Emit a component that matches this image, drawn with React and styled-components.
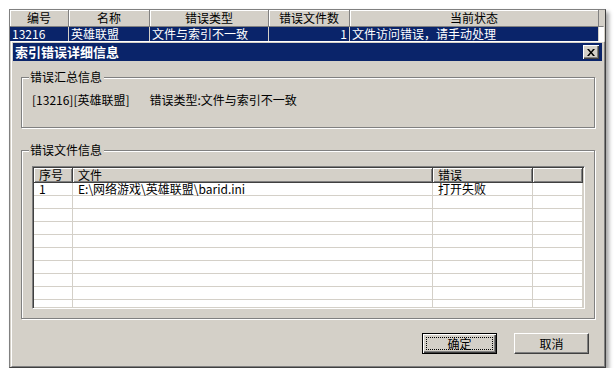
import React from 'react';
import styled, { createGlobalStyle } from 'styled-components';

const GlobalStyle = createGlobalStyle`
  body {
    margin: 0;
    background: #fff;
    font-family: "Noto Sans CJK SC", "Noto Sans", sans-serif;
    font-size: 12px;
    color: #000;
  }
`;

const backColumns = ['编号', '名称', '错误类型', '错误文件数', '当前状态'];
const backRow = ['13216', '英雄联盟', '文件与索引不一致', '1', '文件访问错误，请手动处理'];

const fileColumns = ['序号', '文件', '错误', ''];
const fileRows = [['1', 'E:\\网络游戏\\英雄联盟\\barid.ini', '打开失败', '']];
const EMPTY_ROWS = 10;

const Stage = styled.div`
  padding: 9px 0 0 9px;
`;

const Window = styled.div`
  box-sizing: border-box;
  width: 597px;
  height: 359px;
  display: flex;
  flex-direction: column;
  background: #d4d0c8;
  border-top: 1px solid #808080;
  border-left: 1px solid #808080;
  border-right: 1px solid #404040;
  border-bottom: 1px solid #404040;
  box-shadow: 3px 3px 4px rgba(0, 0, 0, 0.35);
`;

// the parent list that peeks out above the dialog
const BackList = styled.div`
  display: grid;
  grid-template-columns: 59px 81px 119px 81px 249px 1fr;
  margin-right: 3px;
`;

const BackHead = styled.div`
  box-sizing: border-box;
  height: 17px;
  line-height: 16px;
  text-align: center;
  background: #d4d0c8;
  border-right: 1px solid ${p => (p.$filler ? 'transparent' : '#808080')};
  border-bottom: 1px solid #808080;
  box-shadow: ${p => (p.$filler ? 'none' : 'inset 1px 1px 0 #fff')};
`;

const BackCell = styled.div`
  box-sizing: border-box;
  height: 14px;
  line-height: 14px;
  padding: 0 2px;
  white-space: nowrap;
  text-align: ${p => (p.$right ? 'right' : 'left')};
  color: #fff;
  background: ${p => (p.$filler ? '#fff' : '#0a246a')};
  border-right: 1px solid ${p => (p.$filler ? '#fff' : '#d4d0c8')};
`;

const Dialog = styled.div`
  flex: 1;
  display: flex;
  flex-direction: column;
  margin-left: 1px;
  padding: 1px 2px 2px 1px;
  border-top: 1px solid #fff;
  border-left: 1px solid #fff;
  border-right: 1px solid #808080;
  border-bottom: 1px solid #808080;
`;

const TitleBar = styled.div`
  height: 18px;
  display: flex;
  align-items: center;
  justify-content: space-between;
  background: #0a246a;
  padding: 0 3px 0 2px;
`;

const Title = styled.span`
  color: #fff;
  font-weight: bold;
  font-size: 13px;
  line-height: 18px;
`;

const CloseButton = styled.div`
  box-sizing: border-box;
  width: 16px;
  height: 14px;
  display: flex;
  align-items: center;
  justify-content: center;
  background: #d4d0c8;
  box-shadow: inset 1px 1px 0 #fff, inset -1px -1px 0 #404040, inset -2px -2px 0 #808080;
`;

const Body = styled.div`
  flex: 1;
  display: flex;
  flex-direction: column;
  padding: 0 7px 0 8px;
`;

const Group = styled.div`
  position: relative;
  box-sizing: border-box;
  margin-top: ${p => p.$top}px;
  height: ${p => p.$height}px;
  border: 1px solid #808080;
  box-shadow: inset 1px 1px 0 #fff, 1px 1px 0 #fff;
`;

const Legend = styled.span`
  position: absolute;
  top: -8px;
  left: 7px;
  padding: 0 2px 0 1px;
  line-height: 14px;
  background: #d4d0c8;
`;

const Summary = styled.div`
  display: flex;
  gap: 20px;
  padding: 14px 0 0 10px;
  line-height: 16px;
  white-space: pre;
`;

const ListView = styled.div`
  box-sizing: border-box;
  height: 143px;
  margin: 15px 9px 0 10px;
  background: #fff;
  border-top: 1px solid #808080;
  border-left: 1px solid #808080;
  border-right: 1px solid #fff;
  border-bottom: 1px solid #fff;
  box-shadow: inset 1px 1px 0 #404040, inset -1px -1px 0 #d4d0c8;
  padding: 1px;
  overflow: hidden;
`;

const FileGrid = styled.div`
  display: grid;
  grid-template-columns: 39px 360px 100px 1fr;
`;

const FileHead = styled.div`
  box-sizing: border-box;
  height: 15px;
  line-height: 14px;
  padding-left: 5px;
  background: #d4d0c8;
  border-right: 1px solid #404040;
  border-bottom: 1px solid #404040;
  box-shadow: inset 1px 1px 0 #fff, inset -1px -1px 0 #808080;
`;

const FileCell = styled.div`
  box-sizing: border-box;
  height: 13px;
  line-height: 12px;
  padding-left: 5px;
  white-space: nowrap;
  border-right: 1px solid #d4d0c8;
  border-bottom: 1px solid #d4d0c8;
`;

const ButtonRow = styled.div`
  display: flex;
  justify-content: flex-end;
  gap: 17px;
  margin: 14px 6px 0 0;
`;

const Button = styled.div`
  box-sizing: border-box;
  width: 75px;
  height: 21px;
  display: flex;
  align-items: center;
  justify-content: center;
  line-height: 16px;
  background: #d4d0c8;
  border: 1px solid;
  border-color: ${p => (p.$default ? '#000' : '#fff #404040 #404040 #fff')};
  box-shadow: ${p =>
    p.$default
      ? 'inset 1px 1px 0 #fff, inset -1px -1px 0 #404040, inset -2px -2px 0 #808080'
      : 'inset -1px -1px 0 #808080'};
  outline: ${p => (p.$default ? '1px dotted #000' : 'none')};
  outline-offset: -5px;
`;

const CloseIcon = () => (
  <svg width="8" height="7" viewBox="0 0 8 7">
    <path d="M0 0h2l2 2.5L6 0h2L5 3.5 8 7H6L4 4.5 2 7H0l3-3.5z" fill="#000" />
  </svg>
);

export default function App() {
  const rows = [...fileRows, ...Array.from({ length: EMPTY_ROWS }, () => ['', '', '', ''])];

  return (
    <Stage>
      <GlobalStyle />
      <Window>
        <BackList>
          {backColumns.map(c => (
            <BackHead key={c}>{c}</BackHead>
          ))}
          <BackHead $filler />
          {backRow.map((c, i) => (
            <BackCell key={i} $right={i === 3}>
              {c}
            </BackCell>
          ))}
          <BackCell $filler />
        </BackList>

        <Dialog>
          <TitleBar>
            <Title>索引错误详细信息</Title>
            <CloseButton>
              <CloseIcon />
            </CloseButton>
          </TitleBar>

          <Body>
            <Group $top={16} $height={51}>
              <Legend>错误汇总信息</Legend>
              <Summary>
                <span>[13216][英雄联盟]</span>
                <span>错误类型:文件与索引不一致</span>
              </Summary>
            </Group>

            <Group $top={22} $height={169}>
              <Legend>错误文件信息</Legend>
              <ListView>
                <FileGrid>
                  {fileColumns.map((c, i) => (
                    <FileHead key={i}>{c}</FileHead>
                  ))}
                  {rows.map((r, ri) =>
                    r.map((c, ci) => <FileCell key={`${ri}-${ci}`}>{c}</FileCell>)
                  )}
                </FileGrid>
              </ListView>
            </Group>

            <ButtonRow>
              <Button $default>确定</Button>
              <Button>取消</Button>
            </ButtonRow>
          </Body>
        </Dialog>
      </Window>
    </Stage>
  );
}
